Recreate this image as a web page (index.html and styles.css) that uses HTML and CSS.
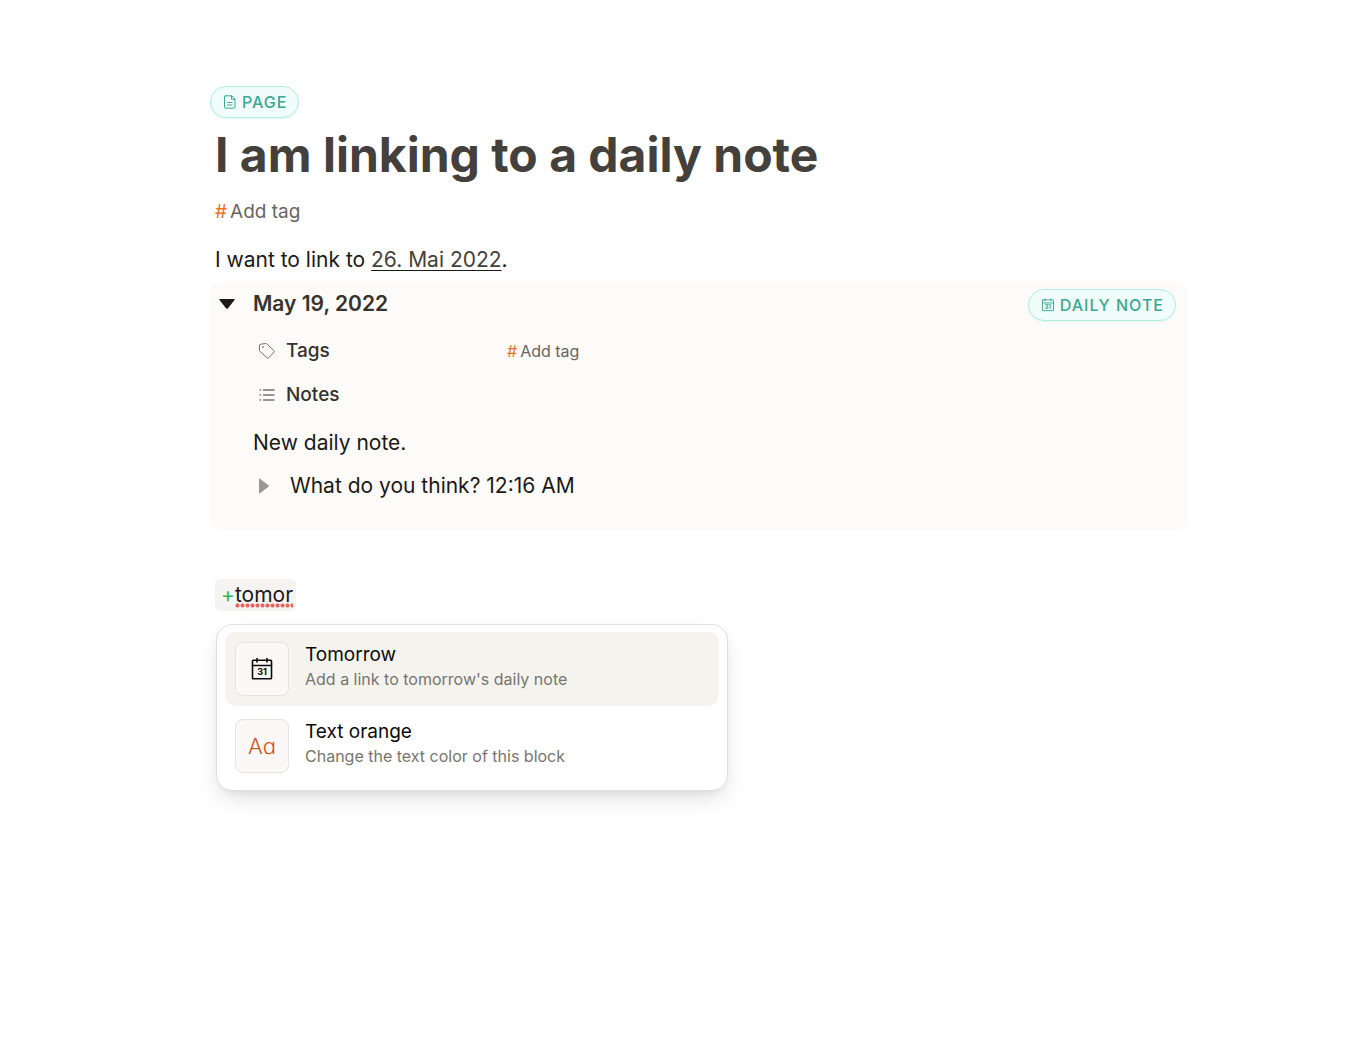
FILE: index.html
```html
<!DOCTYPE html>
<html lang="en">
<head>
<meta charset="utf-8">
<meta name="viewport" content="width=device-width, initial-scale=1">
<title>I am linking to a daily note</title>
<link rel="stylesheet" href="styles.css">
</head>
<body>
<svg class="sprite" aria-hidden="true">
  <symbol id="calendar" viewBox="0 0 24 24">
    <g fill="none" stroke="currentColor" stroke-width="1.6" stroke-linecap="round" stroke-linejoin="round">
      <rect x="2.5" y="3.2" width="19" height="18.500" rx=".8"/>
      <path d="M2.5 8.5h19M7 1.500v3.500M17 1.500v3.500"/>
    </g>
  </symbol>
</svg>
<main class="page">
  <header class="head">
    <button class="badge" type="button">
      <svg class="badge-icon" viewBox="0 0 14 14" fill="none" stroke="currentColor" stroke-linejoin="round" stroke-linecap="round" aria-hidden="true">
        <path d="M2.5 .8h6.2l3.3 3.3v8.1a1 1 0 0 1-1 1H2.500a1 1 0 0 1-1-1V1.800a1 1 0 0 1 1-1zM8.500 1v3.300h3.300M4.500 7.500h4.500M4.500 10h4.500"/>
      </svg>
      PAGE
    </button>
    <h1 class="title">I am linking to a daily note</h1>
    <button class="add-tag" type="button"><span class="hash">#</span>Add tag</button>
  </header>

  <p class="text">I want to link to <a class="date-link" href="#daily">26. Mai 2022</a>.</p>

  <section class="daily" id="daily">
    <div class="daily-head">
      <button class="toggle" type="button" aria-label="Collapse">
        <svg width="18" height="12" viewBox="0 0 18 12" aria-hidden="true"><path d="M2 1h14q1.200 0 .5 1L10 10.300q-1 1-2 0L1.500 2Q.8 1 2 1z" fill="currentColor"/></svg>
      </button>
      <h2 class="daily-title">May 19, 2022</h2>
      <button class="badge" type="button">
        <span class="badge-icon cal"><svg aria-hidden="true"><use href="#calendar"/></svg><span class="day">31</span></span>
        DAILY NOTE
      </button>
    </div>
    <div class="fields">
      <div class="field">
        <svg class="field-icon" viewBox="0 0 18 18" fill="none" stroke="currentColor" stroke-linejoin="round" aria-hidden="true">
          <path d="M2.200 2.300 7.800 1.500q.6-.1 1 .3l7.300 7q.6.6 0 1.200L10.500 16q-.6.600-1.200 0L1.800 9.300q-.4-.4-.3-1L1.500 3q0-.6.7-.7z"/>
          <circle cx="5" cy="5" r=".5"/>
        </svg>
        <span class="field-name">Tags</span>
        <button class="add-tag small" type="button"><span class="hash">#</span>Add tag</button>
      </div>
      <div class="field">
        <svg class="field-icon" viewBox="0 0 18 18" fill="none" stroke="currentColor" stroke-width="1.400" stroke-linecap="round" aria-hidden="true">
          <path d="M5.500 4h10.500M5.500 9h10.500M5.500 14h10.500M2 4h.5M2 9h.5M2 14h.5"/>
        </svg>
        <span class="field-name">Notes</span>
      </div>
    </div>
    <p class="note">New daily note.</p>
    <div class="thought">
      <button class="toggle muted" type="button" aria-label="Expand">
        <svg width="12" height="18" viewBox="0 0 12 18" aria-hidden="true"><path d="M1 2.200q0-1.200 1-.5l8.500 6.500q.8.800 0 1.600L2 16.300q-1 .7-1-.5z" fill="currentColor"/></svg>
      </button>
      <p class="line">What do you think? 12:16 AM</p>
    </div>
  </section>

  <p class="command"><span class="plus">+</span><span class="typed">tomor</span></p>

  <div class="menu" role="listbox" aria-label="Commands">
    <button class="option active" type="button" role="option" aria-selected="true">
      <span class="tile"><span class="cal large"><svg aria-hidden="true"><use href="#calendar"/></svg><span class="day">31</span></span></span>
      <span class="copy"><span class="name">Tomorrow</span><span class="hint">Add a link to tomorrow's daily note</span></span>
    </button>
    <button class="option" type="button" role="option" aria-selected="false">
      <span class="tile"><span class="aa">Aa</span></span>
      <span class="copy"><span class="name">Text orange</span><span class="hint">Change the text color of this block</span></span>
    </button>
  </div>
</main>
</body>
</html>
```

FILE: styles.css
```css
* { box-sizing: border-box; }

body {
  margin: 0;
  background: #fff;
  color: #1c1917;
  font-family: Inter, "Liberation Sans", sans-serif;
  font-size: 21px;
  line-height: 32px;
}

h1, h2, p { margin: 0; }

button {
  margin: 0;
  padding: 0;
  border: 0;
  background: none;
  color: inherit;
  font: inherit;
  text-align: left;
  cursor: pointer;
}

.sprite { position: absolute; width: 0; height: 0; }

.page {
  max-width: 1349px;
  padding: 86px 161px 48px 210px;
}

.head {
  display: flex;
  flex-direction: column;
  align-items: flex-start;
}

.badge {
  display: flex;
  align-items: center;
  gap: 5px;
  height: 32px;
  padding: 0 11px 0 12px;
  border: 1px solid #b2eee0;
  border-radius: 16px;
  background: #f0fdfa;
  box-shadow: 0 1px 2px #e4f5f1;
  color: #3ba794;
  font-size: 16px;
  font-weight: 500;
  letter-spacing: 1px;
  line-height: 30px;
}

.badge-icon { width: 14px; height: 14px; }

.title {
  margin: 5px 0 0 5px;
  color: #44403c;
  font-size: 48px;
  font-weight: 700;
  line-height: 64px;
}

.add-tag {
  display: flex;
  gap: 3px;
  margin: 9px 0 0 5px;
  color: #6b645e;
  font-size: 19px;
  line-height: 32px;
}

.hash { color: #ea7328; }

.text { margin: 16px 0 6px 5px; }

.date-link {
  color: #44403c;
  text-decoration: underline;
  text-decoration-color: #1c1917;
  text-decoration-thickness: 1px;
  text-underline-offset: 3px;
}

.daily {
  padding: 0 12px 28px 8px;
  border-radius: 10px;
  background: #fcfbf9;
}

.daily-head {
  display: flex;
  align-items: center;
  padding-top: 7px;
}

.toggle {
  display: flex;
  align-items: center;
  width: 35px;
  height: 28px;
  color: #1c1917;
}

.daily-head .toggle, .daily-title { padding-bottom: 2px; }

.toggle.muted { width: 32px; color: #999; }

.daily-title {
  flex: 1;
  color: #36322e;
  font-size: 21px;
  font-weight: 600;
  line-height: 28px;
}

.fields {
  display: grid;
  gap: 12px;
  padding: 14px 0 0 40px;
}

.field {
  display: grid;
  grid-template-columns: 18px 211px auto;
  gap: 10px;
  align-items: center;
  justify-content: start;
}

.field-icon { width: 18px; height: 18px; color: #78716c; }

.field-name {
  color: #36322e;
  font-size: 19px;
  font-weight: 500;
}

.add-tag.small { margin: 0; font-size: 16px; }

.note { margin: 16px 0 11px 35px; }

.thought {
  display: flex;
  align-items: center;
  padding-left: 40px;
}

.command {
  width: fit-content;
  margin: 49px 0 13px 5px;
  padding: 0 3px 0 6px;
  border-radius: 5px;
  background: #f5f4f3;
}

.plus { color: #35b34d; }

.typed {
  padding-bottom: 1px;
  background: radial-gradient(circle, #e8655c 40%, transparent 60%) left bottom / 5px 5px repeat-x;
  background: radial-gradient(circle closest-side, #e8655c 60%, transparent 100%) left bottom / 5px 5px repeat-x;
}

.menu {
  display: grid;
  gap: 3px;
  width: 100%;
  max-width: 512px;
  margin-left: 6px;
  padding: 7px 8px;
  border: 1px solid #e3dfdc;
  border-radius: 16px;
  background: #fff;
  box-shadow: 0 10px 24px -4px rgba(0, 0, 0, .13), 0 4px 8px -4px rgba(0, 0, 0, .1);
}

.option {
  display: flex;
  gap: 16px;
  align-items: center;
  padding: 10px;
  border-radius: 10px;
}

.option.active { background: #f4f3ee; }

.tile {
  display: grid;
  place-items: center;
  width: 54px;
  height: 54px;
  border: 1px solid #e7e3df;
  border-radius: 8px;
  background: #faf9f7;
}

.copy { display: grid; padding-bottom: 5px; }

.name { color: #0c0a09; font-size: 19px; line-height: 26px; }

.hint { color: #78756f; font-size: 16px; line-height: 23px; }

.cal { display: grid; place-items: center; }

.cal svg, .cal .day { grid-area: 1 / 1; }

.cal svg { width: 100%; height: 100%; }

.day {
  padding-top: 4px;
  font-size: 6px;
  font-weight: 700;
  letter-spacing: 0;
  line-height: 10px;
}

.cal.large { width: 24px; height: 24px; color: #0c0a09; }

.cal.large .day { padding-top: 6px; font-size: 9px; }

.aa {
  color: #d0531d;
  font-size: 22px;
  font-weight: 300;
  line-height: 24px;
  font-feature-settings: "cv11";
}
```
